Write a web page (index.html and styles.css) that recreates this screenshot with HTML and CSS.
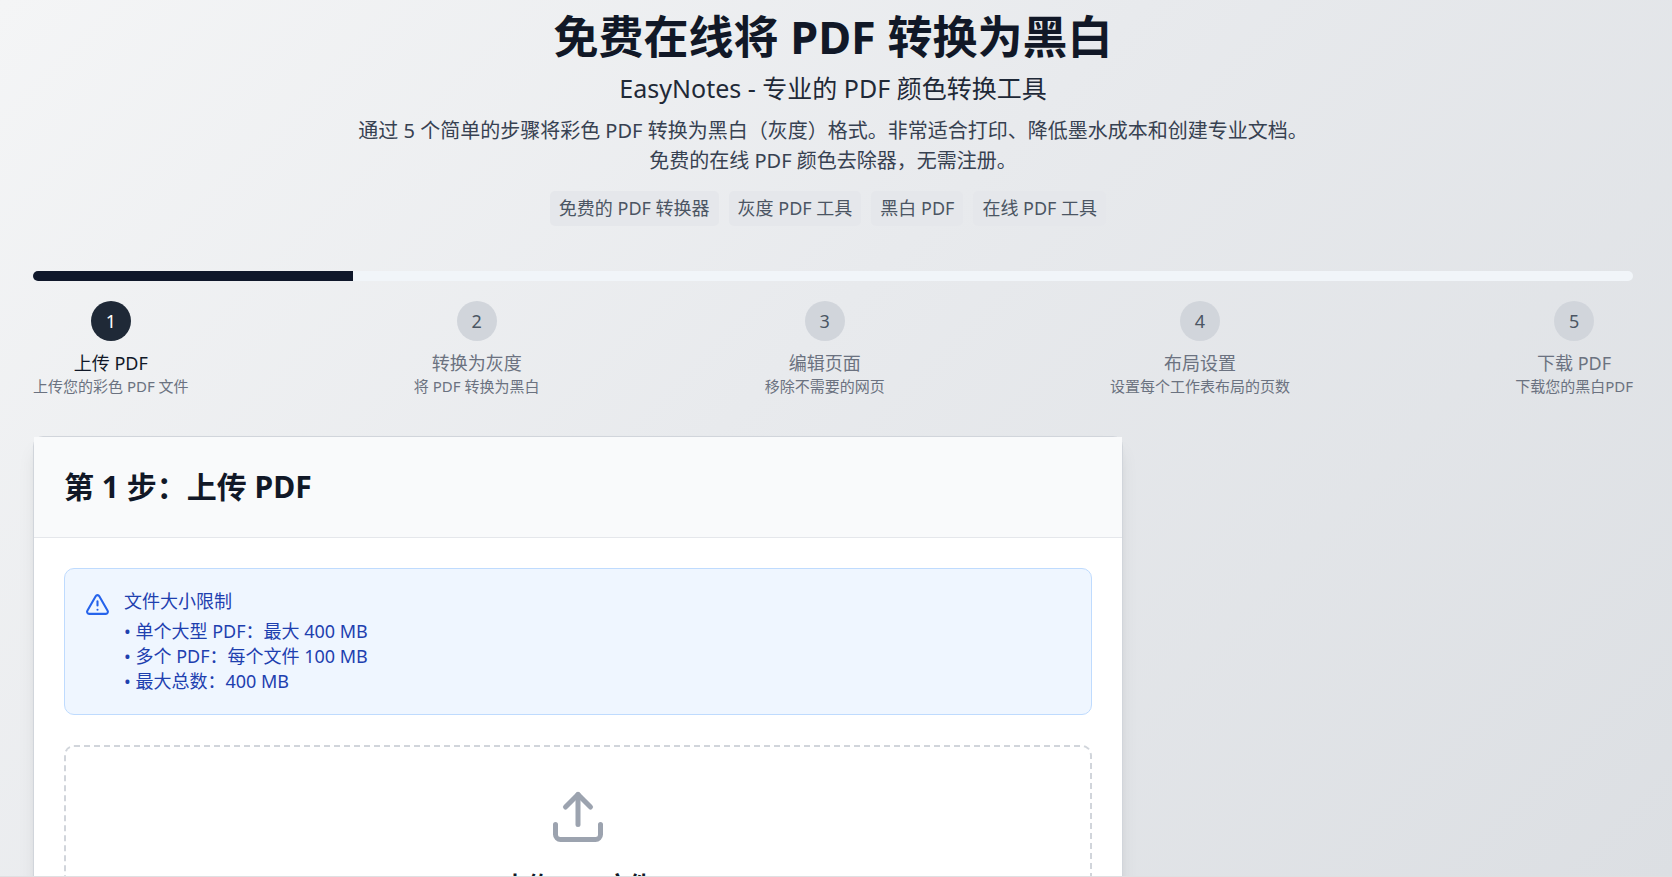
FILE: index.html
```
<!DOCTYPE html>
<html lang="zh-CN">

<head>
  <meta charset="UTF-8">
  <meta name="viewport" content="width=device-width, initial-scale=1.0">
  <title>免费在线将 PDF 转换为黑白</title>
  <link rel="stylesheet" href="styles.css">
</head>

<body>
  <main>
    <header class="hero">
      <h1>免费在线将 PDF 转换为黑白</h1>
      <h2>EasyNotes - 专业的 PDF 颜色转换工具</h2>
      <p>通过 5 个简单的步骤将彩色 PDF 转换为黑白（灰度）格式。非常适合打印、降低墨水成本和创建专业文档。<br>免费的在线 PDF 颜色去除器，无需注册。</p>
      <ul class="tags">
        <li>免费的 PDF 转换器</li>
        <li>灰度 PDF 工具</li>
        <li>黑白 PDF</li>
        <li>在线 PDF 工具</li>
      </ul>
    </header>

    <div class="progress">
      <div class="progress-fill"></div>
    </div>

    <ol class="steps">
      <li class="active">
        <span class="number">1</span>
        <span class="label">上传 PDF</span>
        <span class="hint">上传您的彩色 PDF 文件</span>
      </li>
      <li>
        <span class="number">2</span>
        <span class="label">转换为灰度</span>
        <span class="hint">将 PDF 转换为黑白</span>
      </li>
      <li>
        <span class="number">3</span>
        <span class="label">编辑页面</span>
        <span class="hint">移除不需要的网页</span>
      </li>
      <li>
        <span class="number">4</span>
        <span class="label">布局设置</span>
        <span class="hint">设置每个工作表布局的页数</span>
      </li>
      <li>
        <span class="number">5</span>
        <span class="label">下载 PDF</span>
        <span class="hint">下载您的黑白PDF</span>
      </li>
    </ol>

    <div class="columns">
      <section class="card">
        <div class="card-header">
          <h2>第 1 步：上传 PDF</h2>
        </div>
        <div class="card-body">
          <div class="notice">
            <svg class="notice-icon" viewBox="0 0 24 24" aria-hidden="true">
              <path d="m21.73 18-8-14a2 2 0 0 0-3.48 0l-8 14A2 2 0 0 0 4 21h16a2 2 0 0 0 1.73-3Z" />
              <path d="M12 9v4" />
              <path d="M12 17h.01" />
            </svg>
            <div>
              <h3>文件大小限制</h3>
              <ul>
                <li>• 单个大型 PDF：最大 400 MB</li>
                <li>• 多个 PDF：每个文件 100 MB</li>
                <li>• 最大总数：400 MB</li>
              </ul>
            </div>
          </div>

          <label class="dropzone" for="pdf-file">
            <svg class="upload-icon" viewBox="0 0 24 24" aria-hidden="true">
              <path d="M21 15v4a2 2 0 0 1-2 2H5a2 2 0 0 1-2-2v-4" />
              <path d="m17 8-5-5-5 5" />
              <path d="M12 3v12" />
            </svg>
            <span class="dropzone-title">上传 PDF 文件</span>
            <input type="file" id="pdf-file" accept="application/pdf" multiple hidden>
          </label>
        </div>
      </section>
    </div>
  </main>
</body>

</html>
```
FILE: styles.css
```
* {
  box-sizing: border-box;
  margin: 0;
  padding: 0;
}

body {
  background: linear-gradient(135deg, #f4f5f6, #e8eaed 45%, #dcdfe3);
  border-bottom: 1px solid #dfe0e2;
  color: #111827;
  font-family: "Noto Sans", "Noto Sans CJK SC", sans-serif;
  font-size: 18px;
  height: 100vh;
  line-height: 25px;
  overflow: hidden;
}

main {
  padding: 12px 39px 0 33px;
}

ul,
ol {
  list-style: none;
}

.hero {
  text-align: center;
}

.hero h1 {
  font-size: 45px;
  line-height: 50px;
}

.hero h2 {
  color: #1f2937;
  font-size: 25px;
  font-weight: 400;
  line-height: 35px;
  margin-top: 9px;
}

.hero p {
  color: #374151;
  font-size: 20px;
  line-height: 30px;
  margin-top: 10px;
}

.tags {
  color: #4b5563;
  display: flex;
  gap: 10px;
  justify-content: center;
  margin-top: 15px;
  padding-right: 10px;
}

.tags li {
  background: #e5e7eb;
  border-radius: 5px;
  padding: 5px 9px;
}

.progress {
  background: #f1f5f9;
  border-radius: 5px;
  height: 10px;
  margin-top: 45px;
  overflow: hidden;
}

.progress-fill {
  background: #0f172a;
  height: 100%;
  width: 20%;
}

.steps {
  color: #6b7280;
  display: flex;
  justify-content: space-between;
  margin-top: 20px;
}

.steps li {
  align-items: center;
  display: flex;
  flex-direction: column;
}

.number {
  background: #d1d5db;
  border-radius: 50%;
  color: #4b5563;
  height: 40px;
  line-height: 40px;
  margin-bottom: 10px;
  text-align: center;
  width: 40px;
}

.active .number {
  background: #1f2937;
  color: #fff;
}

.active .label {
  color: #111827;
}

.hint {
  font-size: 15px;
  line-height: 20px;
}

.columns {
  display: grid;
  gap: 40px;
  grid-template-columns: minmax(0, 1fr) 470px;
  margin-top: 40px;
}

.card {
  background: #fff;
  border: 1px solid #d1d5db;
  border-radius: 10px 10px 0 0;
  box-shadow: 0 12px 19px -4px rgba(0, 0, 0, 0.1), 0 5px 8px -5px rgba(0, 0, 0, 0.1);
}

.card-header {
  background: #f9fafb;
  border-bottom: 1px solid #e5e7eb;
  padding: 30px;
}

.card-header h2 {
  font-size: 30px;
  line-height: 40px;
}

.card-body {
  padding: 30px;
}

.notice {
  background: #eff6ff;
  border: 1px solid #bfdbfe;
  border-radius: 10px;
  color: #1e40af;
  display: flex;
  gap: 14px;
  margin-bottom: 30px;
  padding: 20px;
}

.notice h3 {
  font-size: 18px;
  font-weight: 400;
  margin-bottom: 5px;
}

.notice-icon,
.upload-icon {
  fill: none;
  stroke: currentColor;
  stroke-linecap: round;
  stroke-linejoin: round;
  stroke-width: 2;
}

.notice-icon {
  color: #2563eb;
  flex: none;
  height: 25px;
  margin-top: 3px;
  width: 25px;
}

.dropzone {
  align-items: center;
  border: 2px dashed #d1d5db;
  border-radius: 10px;
  cursor: pointer;
  display: flex;
  flex-direction: column;
  padding: 40px;
}

.upload-icon {
  color: #9ca3af;
  height: 60px;
  width: 60px;
}

.dropzone-title {
  font-size: 23px;
  font-weight: 700;
  line-height: 35px;
  margin-top: 20px;
}
```
